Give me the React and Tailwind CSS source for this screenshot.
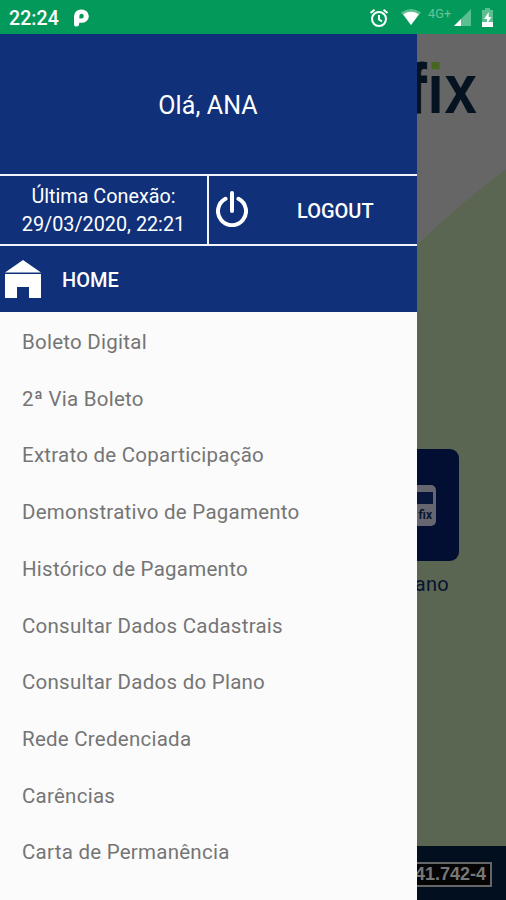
const items = [
  'Boleto Digital',
  '2ª Via Boleto',
  'Extrato de Coparticipação',
  'Demonstrativo de Pagamento',
  'Histórico de Pagamento',
  'Consultar Dados Cadastrais',
  'Consultar Dados do Plano',
  'Rede Credenciada',
  'Carências',
  'Carta de Permanência',
];

function StatusBar() {
  return (
    <header className="flex h-[34px] shrink-0 items-center bg-[#03995b] pl-[9px] pr-[11px] text-white">
      <span className="mt-[3px] w-[65px] whitespace-nowrap text-[19.5px] font-medium leading-6 tracking-[0.1px]">22:24</span>
      <svg className="mt-[2px] h-[18px] w-[15px]" viewBox="0 0 15 18">
        <path d="M0 7A7 6.7 0 0 1 7.3 0.4A7 6.7 0 0 1 14.8 7A7 6.7 0 0 1 7.3 13.8H5.2V15Q5 17.6 2.6 17.6Q0 17.6 0 15Z" fill="white" />
        <path d="M5.4 9.6V6.8A2.2 2.3 0 1 1 7.6 9.4H5.4Z" fill="#03995b" />
      </svg>
      <div className="ml-auto flex items-center">
        <svg className="mr-[2px] mt-[1px] h-[20px] w-[20px]" viewBox="0 0 20 20" fill="none" stroke="white" strokeWidth="2">
          <circle cx="10" cy="11" r="7" />
          <path d="M1.5 5 5.5 1.8M18.5 5l-4-3.2M10 7v4.5l3 1.8" />
        </svg>
        <svg className="ml-[9px] mr-[2px] h-[18px] w-[22px]" viewBox="0 0 22 18">
          <path d="M1 4.5Q11-2.5 21 4.5L11 17Z" fill="#5abf91" />
          <path d="M3.2 6.2Q11 1.5 18.8 6.2L11 17Z" fill="white" />
        </svg>
        <span className="-mt-[7px] ml-[4px] w-[26px] whitespace-nowrap text-[12.5px] leading-4 tracking-[0.2px] text-[#69c49a]">4G+</span>
        <svg className="mt-[2px] h-[18px] w-[17px]" viewBox="0 0 17 18">
          <path d="M0 17 17 0V17Z" fill="#5abf91" />
          <path d="M0 17 7 10V17Z" fill="white" />
        </svg>
        <svg className="ml-[11px] mr-[2px] h-[19px] w-[11px]" viewBox="0 0 11 19">
          <path d="M3 0h5v2h3v17H0V2h3Z" fill="#5abf91" />
          <path d="M0 14h11v5H0Z" fill="white" />
          <path d="M6.7 4 2 11h3v5l4.5-7H6.7Z" fill="white" />
        </svg>
      </div>
    </header>
  );
}

function Page() {
  return (
    <main className="relative flex h-full flex-col bg-[#666666]">
      <svg className="absolute inset-0 h-full w-full" viewBox="0 0 506 866">
        <path d="M0 500C180 370 330 265 417 211Q455 174 506 135V866H0Z" fill="#5b6652" />
      </svg>
      <div className="relative flex h-[415px] justify-end pr-[29px] pt-[15px]">
        <div className="flex h-[80px] origin-right scale-x-[0.82] font-['Liberation_Sans',sans-serif] text-[71px] font-bold leading-[80px] text-[#04131f]">
          <span className="mr-[1px] [-webkit-text-stroke:1px_#04131f]">f</span>
          <span className="mr-[1px] bg-[linear-gradient(#46661f_22px,#04131f_22px)] bg-clip-text text-transparent">i</span>
          <span>x</span>
        </div>
      </div>
      <div className="relative flex flex-col items-end">
        <div className="mr-[47px] flex h-[112px] w-[112px] items-center justify-end rounded-[9px] bg-[#020f33] pr-[23px]">
          <div className="flex h-[41px] w-[66px] flex-col rounded-[5px] bg-[#666670] pt-[7px]">
            <div className="mr-[3px] h-[12px] bg-[#07163a]" />
            <span className="pr-[4px] pt-[3px] text-right text-[12px] font-bold leading-[17px] text-[#0a1630]">fix</span>
          </div>
        </div>
        <span className="mr-[57px] mt-[11px] text-[20px] leading-6 tracking-[0.3px] text-[#071333]">Plano</span>
      </div>
      <footer className="relative mt-auto flex h-[54px] items-center justify-end bg-[#010f1f] pr-[14px]">
        <span className="mt-[2px] flex h-[25px] items-center border-2 border-[#666] bg-[#050505] px-[4px] font-['Liberation_Sans',sans-serif] text-[18px] font-bold text-[#777]">41.742-4</span>
      </footer>
    </main>
  );
}

function Drawer() {
  return (
    <nav className="absolute left-0 top-0 flex h-full w-[417px] flex-col bg-[#fbfbfb]">
      <div className="flex h-[140px] shrink-0 items-center justify-center bg-[#103079] text-[25px] text-white">
        <span className="mt-[3px] pr-[1px] tracking-[0.1px]">Olá, ANA</span>
      </div>
      <div className="flex h-[72px] shrink-0 border-b-2 border-t-2 border-[#f2f3fc] bg-[#103079] text-white">
        <div className="flex w-[209px] items-center justify-center border-r-2 border-[#f2f3fc] text-center text-[19.8px] leading-[28px]">
          <p className="pt-[2px]">Última Conexão:<br />29/03/2020, 22:21</p>
        </div>
        <div className="flex flex-1 items-center pl-[7px]">
          <svg className="-mt-[2px] h-[36px] w-[32px]" viewBox="0 0 32 36" fill="none" stroke="white" strokeWidth="4">
            <path d="M9.5 7.8A14 14 0 1 0 22.5 7.8" strokeLinecap="round" />
            <path d="M16 2v18" strokeLinecap="round" />
          </svg>
          <span className="ml-[49px] mt-[2px] text-[20px] font-medium">LOGOUT</span>
        </div>
      </div>
      <div className="flex h-[66px] shrink-0 items-center bg-[#103079] pl-[5px] text-white">
        <svg className="h-[38px] w-[36px]" viewBox="0 0 36 38" fill="white">
          <path d="M18 0 36 12.5H0Z" />
          <path d="M0 14h36v24H24V27H12v11H0Z" />
        </svg>
        <span className="ml-[21px] mt-[1px] text-[20px] font-medium">HOME</span>
      </div>
      <ul className="flex flex-col pl-[22px] pt-[2px]">
        {items.map((item) => (
          <li key={item} className="flex h-[56.72px] items-center whitespace-nowrap text-[20.5px] tracking-[0.25px] text-[#757575]">{item}</li>
        ))}
      </ul>
    </nav>
  );
}

export default function App() {
  return (
    <div className="flex h-[900px] w-[506px] flex-col overflow-hidden font-[Roboto,sans-serif]">
      <StatusBar />
      <div className="relative min-h-0 flex-1">
        <Page />
        <Drawer />
      </div>
    </div>
  );
}
